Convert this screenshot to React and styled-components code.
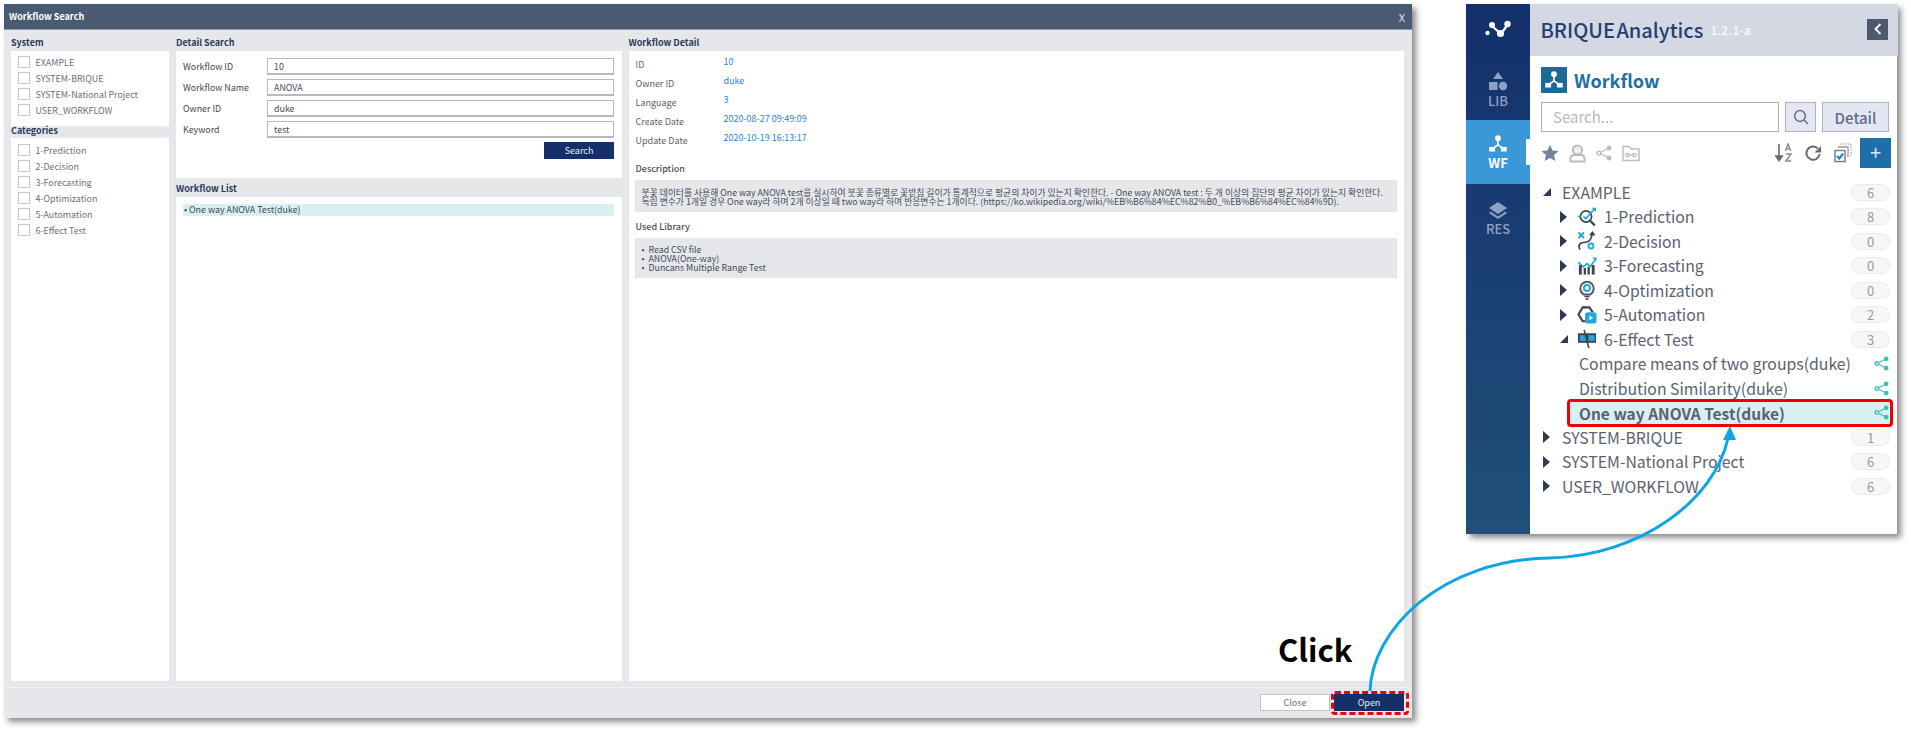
import React from "react";
import styled, { createGlobalStyle } from "styled-components";

const GlobalStyle = createGlobalStyle`
  html, body { margin: 0; padding: 0; background: #fff; overflow: hidden; }
  body { width: 1911px; height: 731px; font-family: "Noto Sans CJK KR", "Noto Sans", sans-serif; }
  * { box-sizing: border-box; }
`;

const Page = styled.div`
  position: relative;
  width: 1911px;
  height: 731px;
  padding: 4px 0 0 4px;
  display: flex;
  align-items: flex-start;
  gap: 54px;
`;

/* ---------- search dialog ---------- */
const Dialog = styled.div`
  width: 1408px;
  height: 714px;
  background: #e6e7eb;
  box-shadow: 4px 4px 6px rgba(0, 0, 0, 0.45);
  display: flex;
  flex-direction: column;
`;
const DialogTitle = styled.div`
  height: 26px;
  flex: none;
  background: #4a5a72;
  color: #fff;
  font-size: 9px;
  font-weight: 700;
  display: flex;
  align-items: center;
  justify-content: space-between;
  padding: 0 7px 0 5px;
  border-bottom: 1px solid #8d97a8;
`;
const CloseX = styled.span`
  font-size: 11px;
  font-weight: 400;
  color: #dfe3ea;
`;
const DialogBody = styled.div`
  flex: none;
  height: 651px;
  display: grid;
  grid-template-columns: 158px 445.5px 775px;
  grid-template-rows: minmax(0, 1fr);
  column-gap: 7px;
  padding-left: 7px;
`;
const Column = styled.div`
  display: flex;
  flex-direction: column;
  min-height: 0;
`;
const SectionTitle = styled.div`
  height: ${p => p.$h || 21}px;
  flex: none;
  font-size: 9px;
  font-weight: 700;
  color: #2b3a5c;
  line-height: ${p => p.$lh || 26}px;
  white-space: nowrap;
`;
const Panel = styled.div`
  background: #fff;
  flex: ${p => (p.$h ? "none" : 1)};
  height: ${p => (p.$h ? `${p.$h}px` : "auto")};
  padding: ${p => p.$pad || 0};
`;
const CheckRow = styled.label`
  height: 16px;
  display: flex;
  align-items: center;
  gap: 5.5px;
  padding-left: 7px;
  font-size: 8.9px;
  color: #6a6f7a;
  white-space: nowrap;
`;
const CheckBox = styled.span`
  width: 12px;
  height: 12px;
  flex: none;
  background: #fff;
  border: 1px solid #c4c8d2;
`;
const FormRow = styled.div`
  display: flex;
  align-items: center;
  height: 17px;
  margin-bottom: 4px;
  font-size: 8.9px;
  color: #3f4654;
`;
const FormLabel = styled.span`
  width: 84px;
  flex: none;
`;
const TextField = styled.div`
  flex: 1;
  height: 17px;
  background: #fff;
  border: 1px solid #b5b9c4;
  border-bottom-width: 2px;
  padding-left: 6px;
  line-height: 15px;
  color: #444b58;
`;
const SearchBar = styled.div`
  display: flex;
  justify-content: flex-end;
  margin-top: 1px;
`;
const PrimaryButton = styled.div`
  position: relative;
  width: 70px;
  height: 17px;
  background: #14306a;
  color: #e8ecf4;
  font-size: 9px;
  line-height: 17px;
  text-align: center;
`;
const ListItem = styled.div`
  height: 12px;
  background: #d7f0f2;
  font-size: 8.9px;
  line-height: 12px;
  color: #3f4654;
  padding-left: 1px;
`;
const DetailRow = styled.div`
  display: grid;
  grid-template-columns: 88px 1fr;
  height: 19px;
  font-size: 9px;
  line-height: 12px;
`;
const DetailLabel = styled.span`
  color: #5a6070;
  padding-top: 3px;
`;
const DetailValue = styled.span`
  color: #2a83d8;
`;
const SubTitle = styled.div`
  margin-top: ${p => p.$top}px;
  height: 12px;
  font-size: 9px;
  font-weight: 500;
  line-height: 12px;
  color: #4a5060;
`;
const NoteBox = styled.div`
  margin: 5px 0 0 -1px;
  width: 762px;
  height: ${p => p.$h}px;
  background: #e6e7eb;
  padding: 7.5px 7px 0;
  font-size: 8.8px;
  line-height: 9px;
  color: #444b58;
  white-space: nowrap;
`;
const Bullets = styled.ul`
  margin: -1px 0 0;
  padding: 0;
  list-style: none;
`;
const BulletItem = styled.li`
  display: flex;
  gap: 4px;
  &::before {
    content: "•";
  }
`;
const DialogFooter = styled.div`
  margin-top: 6px;
  flex: none;
  height: 31px;
  border-top: 1px solid #f0f1f3;
  display: flex;
  justify-content: flex-end;
  align-items: flex-start;
  gap: 4px;
  padding: 6px 8px 0 0;
`;
const GhostButton = styled.div`
  width: 70px;
  height: 17px;
  background: #fff;
  border: 1px solid #bfc3cd;
  color: #6a6f7a;
  font-size: 9px;
  line-height: 15px;
  text-align: center;
`;
const DashedMark = styled.span`
  position: absolute;
  left: -3.5px;
  right: -5px;
  top: -3.5px;
  bottom: -4px;
  border: 3px dashed #f00000;
  border-radius: 4px;
`;

/* ---------- briques side panel ---------- */
const AppPanel = styled.div`
  width: 431px;
  height: 530px;
  display: flex;
  background: #fff;
  box-shadow: 4px 4px 6px rgba(0, 0, 0, 0.45);
`;
const Rail = styled.div`
  width: 64px;
  flex: none;
  background: linear-gradient(180deg, #13306b 0%, #214f7a 100%);
  display: flex;
  flex-direction: column;
`;
const RailLogo = styled.div`
  height: 56px;
  padding-bottom: 6px;
  display: flex;
  align-items: center;
  justify-content: center;
`;
const RailTab = styled.div`
  position: relative;
  height: ${p => p.$h}px;
  background: ${p => (p.$active ? "#3a97d8" : "transparent")};
  color: ${p => (p.$active ? "#fff" : "#8fa2c4")};
  display: flex;
  flex-direction: column;
  align-items: center;
  justify-content: center;
  font-size: 13px;
  font-weight: ${p => (p.$active ? 700 : 500)};
  line-height: 14px;
  gap: 2px;
`;
const TabNotch = styled.span`
  position: absolute;
  right: 0;
  top: 19px;
  width: 4px;
  height: 26px;
  background: #fff;
`;
const Main = styled.div`
  flex: 1;
  display: flex;
  flex-direction: column;
`;
const Header = styled.div`
  height: 52px;
  background: #d3d8e3;
  display: flex;
  align-items: center;
  padding: 0 10px 2px 10.5px;
`;
const Brand = styled.span`
  font-size: 20px;
  font-weight: 500;
  color: #24406f;
  word-spacing: -3px;
  white-space: nowrap;
`;
const Version = styled.span`
  margin-left: 7px;
  font-size: 12px;
  font-weight: 700;
  color: #f2f4f8;
`;
const BackButton = styled.div`
  margin-left: auto;
  width: 21px;
  height: 21px;
  background: #4d5a6e;
  display: flex;
  align-items: center;
  justify-content: center;
`;
const Content = styled.div`
  padding: 11px 9px 0 11px;
`;
const TitleRow = styled.div`
  height: 26px;
  display: flex;
  align-items: center;
  gap: 7px;
  font-size: 18px;
  font-weight: 700;
  color: #1e6fa3;
`;
const TitleIcon = styled.span`
  width: 26px;
  height: 26px;
  background: #1c6a9c;
  display: flex;
  align-items: center;
  justify-content: center;
`;
const SearchRow = styled.div`
  margin-top: 9px;
  display: flex;
  height: 30px;
  gap: 6px;
`;
const SearchField = styled.div`
  width: 238px;
  border: 1.5px solid #a9b0bf;
  color: #b5b8c0;
  font-size: 15px;
  line-height: 27px;
  padding-left: 11px;
`;
const SquareButton = styled.div`
  width: ${p => p.$w}px;
  background: #e4e7f2;
  border: 1.5px solid #a9b4cb;
  color: #5f6d8c;
  font-size: 15px;
  font-weight: 500;
  display: flex;
  align-items: center;
  justify-content: center;
`;
const ToolRow = styled.div`
  margin-top: 6px;
  height: 30px;
  display: flex;
  align-items: center;
  gap: 10px;
`;
const ToolSpacer = styled.div`
  flex: 1;
`;
const ToolGroup = styled.div`
  display: flex;
  align-items: center;
  gap: 12px;
  margin-right: -2px;
`;
const AddButton = styled.div`
  width: 31px;
  height: 30px;
  margin-left: -4px;
  background: #1c6fa8;
  color: #dfeaf5;
  font-size: 20px;
  line-height: 28px;
  text-align: center;
`;
const Tree = styled.div`
  margin-top: 12px;
`;
const Row = styled.div`
  position: relative;
  isolation: isolate;
  height: 24.5px;
  display: flex;
  align-items: center;
  padding-left: ${p => p.$pad}px;
  font-size: ${p => (p.$selected ? 15.5 : 15.8)}px;
  font-weight: ${p => (p.$selected ? 700 : 400)};
  color: #5a6270;
  white-space: nowrap;
`;
const Selection = styled.span`
  position: absolute;
  z-index: -1;
  left: 26px;
  right: -4px;
  top: -2px;
  bottom: -2px;
  background: #d9f0f2;
  border: 3px solid #f00000;
  border-radius: 4px;
`;
const Caret = styled.span`
  width: 0;
  height: 0;
  flex: none;
  margin-right: ${p => p.$gap}px;
  ${p =>
    p.$open
      ? `border-style: solid; border-width: 0 0 8px 8px; border-color: transparent transparent #2e3a52 transparent; margin-left: 0;`
      : `border-style: solid; border-width: 6px 0 6px 7px; border-color: transparent transparent transparent #2e3a52;`}
`;
const RowIcon = styled.span`
  width: 20px;
  height: 20px;
  flex: none;
  margin-right: 7px;
  display: flex;
`;
const Badge = styled.span`
  margin-left: auto;
  margin-right: -1px;
  width: 39px;
  height: 17px;
  flex: none;
  background: #f6f6f6;
  border: 1px solid #ebebeb;
  border-radius: 9px;
  color: #9a9a9a;
  font-size: 13px;
  line-height: 15px;
  text-align: center;
`;
const ShareSlot = styled.span`
  margin-left: auto;
  display: flex;
`;

/* ---------- call-out layer ---------- */
const Callout = styled.svg`
  position: absolute;
  left: 0;
  top: 0;
  pointer-events: none;
`;
const ClickLabel = styled.div`
  position: absolute;
  left: 1278px;
  top: 627px;
  font-size: 31px;
  font-weight: 700;
  line-height: 44px;
  color: #000;
`;

/* ---------- drawings ---------- */
const WorkflowGlyph = ({ size = 22 }) => (
  <svg width={size} height={size} viewBox="0 0 24 24" fill="none">
    <circle cx="12" cy="5" r="3.4" fill="#fff" />
    <path d="M12 6v7M12 13l-7 5M12 13l7 5" stroke="#fff" strokeWidth="2" />
    <rect x="1.5" y="15.5" width="7" height="5.5" fill="#fff" />
    <rect x="15.5" y="15.5" width="7" height="5.5" fill="#fff" />
  </svg>
);
const LogoGlyph = () => (
  <svg width="26" height="18" viewBox="0 0 26 18">
    <path d="M7 6l9 8M16 14L23 4" stroke="#fff" strokeWidth="2.2" fill="none" />
    <circle cx="2.5" cy="13" r="2.2" fill="#fff" />
    <circle cx="7" cy="5" r="3" fill="#fff" />
    <circle cx="15.5" cy="13.5" r="3.6" fill="#fff" />
    <circle cx="22.5" cy="4" r="3.2" fill="#fff" />
  </svg>
);
const LibGlyph = () => (
  <svg width="20" height="20" viewBox="0 0 20 20" fill="currentColor">
    <path d="M10 0l5 7H5z" />
    <rect x="1" y="10" width="8.5" height="8" />
    <circle cx="15" cy="14" r="4.2" />
  </svg>
);
const LayersGlyph = () => (
  <svg width="20" height="18" viewBox="0 0 20 18" fill="currentColor">
    <path d="M10 0l9 6-9 6-9-6z" />
    <path d="M2.5 9.5L10 14.5l7.5-5 1.5 1.5-9 6-9-6z" />
  </svg>
);
const Star = () => (
  <svg width="18" height="18" viewBox="0 0 18 18">
    <path d="M9 .8l2.5 5.6 6.1.6-4.6 4 1.4 6L9 14l-5.4 3 1.4-6-4.6-4 6.1-.6z" fill="#76829a" />
  </svg>
);
const Person = () => (
  <svg width="17" height="19" viewBox="0 0 17 19" fill="none" stroke="#bcbcbc" strokeWidth="2">
    <circle cx="8.5" cy="6" r="4.6" fill="#f0f0f0" />
    <path d="M1.5 17.5v-3c0-2 1.5-3.5 3.5-3.5h7c2 0 3.5 1.5 3.5 3.5v3z" />
  </svg>
);
const Share = ({ size = 16, color = "#bcbcbc" }) => (
  <svg width={size} height={size} viewBox="0 0 16 16" fill="none" stroke={color} strokeWidth="1.2">
    <path d="M12.6 3.2L3.4 8l9.2 4.8" />
    <circle cx="13" cy="3" r="1.9" fill={color} />
    <circle cx="3" cy="8" r="1.9" fill="#fff" strokeWidth="1.4" />
    <circle cx="13" cy="13" r="1.9" fill={color} />
  </svg>
);
const KeyFolder = () => (
  <svg width="18" height="17" viewBox="0 0 18 17" fill="none" stroke="#bcbcbc" strokeWidth="1.4">
    <path d="M1 15.5V1.5h6l2 2.5h8v11.5z" />
    <circle cx="5.5" cy="10" r="1.6" />
    <circle cx="12.5" cy="10" r="1.6" />
    <path d="M7 10h4" />
  </svg>
);
const SortAz = () => (
  <svg width="18" height="20" viewBox="0 0 18 20" fill="none">
    <path d="M4 1v15M.8 13l3.2 4.5L7.2 13z" stroke="#6b6b6b" strokeWidth="1.6" fill="#6b6b6b" />
    <path d="M10.5 8l2.6-7 2.6 7M11.4 5.8h3.4" stroke="#8a8a8a" strokeWidth="1.4" />
    <path d="M10.8 11h5.2l-5.2 7h5.4" stroke="#8a8a8a" strokeWidth="1.5" />
  </svg>
);
const Refresh = () => (
  <svg width="17" height="17" viewBox="0 0 17 17" fill="none">
    <path d="M14.6 9a6.6 6.6 0 1 1-1.8-5.4" stroke="#6b6b6b" strokeWidth="2" />
    <path d="M16 1v6.4h-6.4z" fill="#6b6b6b" />
  </svg>
);
const CheckCopy = () => (
  <svg width="18" height="20" viewBox="0 0 18 20" fill="none">
    <path d="M6 1h11v12" stroke="#9a9a9a" strokeDasharray="1.5 1.2" />
    <path d="M4 4h10v10" stroke="#9a9a9a" strokeWidth="1.3" />
    <rect x="1" y="7.5" width="10" height="11" fill="#fff" stroke="#777" strokeWidth="1.4" />
    <path d="M3 13l2.4 2.6L9 10.5" stroke="#1c86d2" strokeWidth="2.2" />
  </svg>
);
const ico = "#3b4350";
const cy = "#1fa8dc";
const treeIcons = {
  prediction: (
    <svg width="20" height="20" viewBox="0 0 20 20" fill="none">
      <circle cx="9" cy="9.5" r="5.6" stroke={ico} strokeWidth="1.7" />
      <path d="M13.2 13.8l4.6 4.6" stroke={ico} strokeWidth="2.2" />
      <path d="M6.5 9.5l2.2 2.2L17 2.5" stroke={cy} strokeWidth="1.7" />
      <path d="M14.5 .8H19V5z" fill={cy} />
      <path d="M.5 9.5l3-2v4z" fill={cy} />
    </svg>
  ),
  decision: (
    <svg width="20" height="20" viewBox="0 0 20 20" fill="none">
      <path d="M1.5 1.5l5.5 5.5M7 1.5L1.5 7" stroke={cy} strokeWidth="2" />
      <circle cx="14" cy="15" r="2.5" stroke={cy} strokeWidth="1.8" />
      <path d="M3 18.5c-2.5-4 0-7 3.5-7 4.5 0 8-2 8.5-8" stroke={ico} strokeWidth="1.7" />
      <path d="M12 4.2L15.5 0l3 4.5z" fill={ico} />
    </svg>
  ),
  forecasting: (
    <svg width="21" height="20" viewBox="0 0 21 20" fill="none">
      <path d="M1.5 6l5 5 4-3.5 3.5 3 5.5-7.5" stroke={cy} strokeWidth="1.7" />
      <path d="M16 1h4.5v4.5z" fill={cy} />
      <rect x="2" y="9" width="3" height="10" fill={ico} />
      <rect x="7" y="12" width="2.4" height="7" fill={ico} />
      <rect x="11" y="11" width="2.4" height="8" fill={ico} />
      <rect x="15.5" y="9" width="3" height="10" fill={ico} />
    </svg>
  ),
  optimization: (
    <svg width="20" height="20" viewBox="0 0 20 20" fill="none">
      <path d="M6.5 14.5c-2-1.5-3.2-3.5-3.2-6a6.7 6.7 0 0 1 13.4 0c0 2.5-1.2 4.5-3.2 6z" stroke="#565d68" strokeWidth="2" />
      <circle cx="10" cy="8" r="3" stroke={cy} strokeWidth="2" />
      <path d="M7.5 16.5h5M8.5 19h3" stroke={ico} strokeWidth="1.7" />
    </svg>
  ),
  automation: (
    <svg width="21" height="20" viewBox="0 0 21 20" fill="none">
      <path d="M9.5 16.5H6L1.5 9.5 6 2h7l3.5 5" stroke={ico} strokeWidth="2.2" />
      <path d="M7 1l1.5 1.5M3 5.5l1 1M3 13.5l1-1" stroke={ico} strokeWidth="1.6" />
      <rect x="8.5" y="7" width="12" height="12" rx="3" fill={cy} />
      <path d="M13 10.5l4 2.5-4 2.5z" fill="#fff" />
    </svg>
  ),
  effect: (
    <svg width="21" height="20" viewBox="0 0 21 20" fill="none">
      <rect x="1" y="4" width="19" height="10" fill={ico} />
      <rect x="3" y="6" width="6.5" height="6" fill={cy} />
      <rect x="12" y="6" width="6.5" height="6" fill={cy} />
      <path d="M7.5 .5L12.5 19.5" stroke={ico} strokeWidth="1.6" />
    </svg>
  ),
};

const systems = ["EXAMPLE", "SYSTEM-BRIQUE", "SYSTEM-National Project", "USER_WORKFLOW"];
const categories = ["1-Prediction", "2-Decision", "3-Forecasting", "4-Optimization", "5-Automation", "6-Effect Test"];
const fields = [
  ["Workflow ID", "10"],
  ["Workflow Name", "ANOVA"],
  ["Owner ID", "duke"],
  ["Keyword", "test"],
];
const details = [
  ["ID", "10"],
  ["Owner ID", "duke"],
  ["Language", "3"],
  ["Create Date", "2020-08-27 09:49:09"],
  ["Update Date", "2020-10-19 16:13:17"],
];
const folders = [
  ["prediction", "1-Prediction", 8],
  ["decision", "2-Decision", 0],
  ["forecasting", "3-Forecasting", 0],
  ["optimization", "4-Optimization", 0],
  ["automation", "5-Automation", 2],
];

function SearchDialog() {
  return (
    <Dialog>
      <DialogTitle>
        Workflow Search
        <CloseX>X</CloseX>
      </DialogTitle>
      <DialogBody>
        <Column>
          <SectionTitle>System</SectionTitle>
          <Panel $h={75} $pad="3px 0 0">
            {systems.map(s => (
              <CheckRow key={s}><CheckBox />{s}</CheckRow>
            ))}
          </Panel>
          <SectionTitle $h={12} $lh={9}>Categories</SectionTitle>
          <Panel $pad="4px 0 0">
            {categories.map(s => (
              <CheckRow key={s}><CheckBox />{s}</CheckRow>
            ))}
          </Panel>
        </Column>
        <Column>
          <SectionTitle>Detail Search</SectionTitle>
          <Panel $h={127} $pad="7px 7.5px 0 7px">
            {fields.map(([label, value]) => (
              <FormRow key={label}>
                <FormLabel>{label}</FormLabel>
                <TextField>{value}</TextField>
              </FormRow>
            ))}
            <SearchBar><PrimaryButton>Search</PrimaryButton></SearchBar>
          </Panel>
          <SectionTitle $h={19} $lh={22}>Workflow List</SectionTitle>
          <Panel $pad="7px 7.5px 0 7px">
            <ListItem>• One way ANOVA Test(duke)</ListItem>
          </Panel>
        </Column>
        <Column>
          <SectionTitle>Workflow Detail</SectionTitle>
          <Panel $pad="5px 0 0 7px">
            {details.map(([label, value]) => (
              <DetailRow key={label}>
                <DetailLabel>{label}</DetailLabel>
                <DetailValue>{value}</DetailValue>
              </DetailRow>
            ))}
            <SubTitle $top={12}>Description</SubTitle>
            <NoteBox $h={32}>
              붓꽃 데이터를 사용해 One way ANOVA test을 실시하여 붓꽃 종류별로 꽃받침 길이가 통계적으로 평균의 차이가 있는지 확인한다. - One way ANOVA test : 두 개 이상의 집단의 평균 차이가 있는지 확인한다.
              <br />
              독립 변수가 1개일 경우 One way라 하며 2개 이상일 때 two way라 하며 반응변수는 1개이다. (https://ko.wikipedia.org/wiki/%EB%B6%84%EC%82%B0_%EB%B6%84%EC%84%9D).
            </NoteBox>
            <SubTitle $top={9}>Used Library</SubTitle>
            <NoteBox $h={40}>
              <Bullets>
                <BulletItem>Read CSV file</BulletItem>
                <BulletItem>ANOVA(One-way)</BulletItem>
                <BulletItem>Duncans Multiple Range Test</BulletItem>
              </Bullets>
            </NoteBox>
          </Panel>
        </Column>
      </DialogBody>
      <DialogFooter>
        <GhostButton>Close</GhostButton>
        <PrimaryButton>Open<DashedMark /></PrimaryButton>
      </DialogFooter>
    </Dialog>
  );
}

function WorkflowPanel() {
  return (
    <AppPanel>
      <Rail>
        <RailLogo><LogoGlyph /></RailLogo>
        <RailTab $h={60}><LibGlyph />LIB</RailTab>
        <RailTab $h={64} $active><WorkflowGlyph size={20} />WF<TabNotch /></RailTab>
        <RailTab $h={70}><LayersGlyph />RES</RailTab>
      </Rail>
      <Main>
        <Header>
          <Brand>BRIQUE Analytics</Brand>
          <Version>1.2.1-a</Version>
          <BackButton>
            <svg width="8" height="12" viewBox="0 0 8 12" fill="none">
              <path d="M6.5 1L1.5 6l5 5" stroke="#fff" strokeWidth="1.8" />
            </svg>
          </BackButton>
        </Header>
        <Content>
          <TitleRow>
            <TitleIcon><WorkflowGlyph size={20} /></TitleIcon>
            Workflow
          </TitleRow>
          <SearchRow>
            <SearchField>Search...</SearchField>
            <SquareButton $w={31}>
              <svg width="16" height="16" viewBox="0 0 16 16" fill="none" stroke="#5f6d8c" strokeWidth="1.5">
                <circle cx="7" cy="7" r="5.4" />
                <path d="M11 11l4 4" />
              </svg>
            </SquareButton>
            <SquareButton $w={67}>Detail</SquareButton>
          </SearchRow>
          <ToolRow>
            <Star />
            <Person />
            <Share />
            <KeyFolder />
            <ToolSpacer />
            <ToolGroup>
              <SortAz />
              <Refresh />
              <CheckCopy />
              <AddButton>+</AddButton>
            </ToolGroup>
          </ToolRow>
          <Tree>
            <Row $pad={2}><Caret $open $gap={11} />EXAMPLE<Badge>6</Badge></Row>
            {folders.map(([icon, name, count]) => (
              <Row $pad={19} key={name}>
                <Caret $gap={10} />
                <RowIcon>{treeIcons[icon]}</RowIcon>
                {name}
                <Badge>{count}</Badge>
              </Row>
            ))}
            <Row $pad={19}>
              <Caret $open $gap={9} />
              <RowIcon>{treeIcons.effect}</RowIcon>
              6-Effect Test
              <Badge>3</Badge>
            </Row>
            <Row $pad={38}>Compare means of two groups(duke)<ShareSlot><Share size={15} color="#3dbdb5" /></ShareSlot></Row>
            <Row $pad={38}>Distribution Similarity(duke)<ShareSlot><Share size={15} color="#3dbdb5" /></ShareSlot></Row>
            <Row $pad={38} $selected>
              <Selection />
              One way ANOVA Test(duke)
              <ShareSlot><Share size={15} color="#3dbdb5" /></ShareSlot>
            </Row>
            <Row $pad={2}><Caret $gap={12} />SYSTEM-BRIQUE<Badge>1</Badge></Row>
            <Row $pad={2}><Caret $gap={12} />SYSTEM-National Project<Badge>6</Badge></Row>
            <Row $pad={2}><Caret $gap={12} />USER_WORKFLOW<Badge>6</Badge></Row>
          </Tree>
        </Content>
      </Main>
    </AppPanel>
  );
}

export default function App() {
  return (
    <>
      <GlobalStyle />
      <Page>
        <SearchDialog />
        <WorkflowPanel />
        <ClickLabel>Click</ClickLabel>
        <Callout width="1911" height="731" viewBox="0 0 1911 731" fill="none">
          <path d="M1370 691C1372 630 1440 560 1550 558C1640 556 1715 500 1728 438" stroke="#0ea5e6" strokeWidth="3" />
          <path d="M1730 426L1723 440L1736 440Z" fill="#0ea5e6" />
        </Callout>
      </Page>
    </>
  );
}
